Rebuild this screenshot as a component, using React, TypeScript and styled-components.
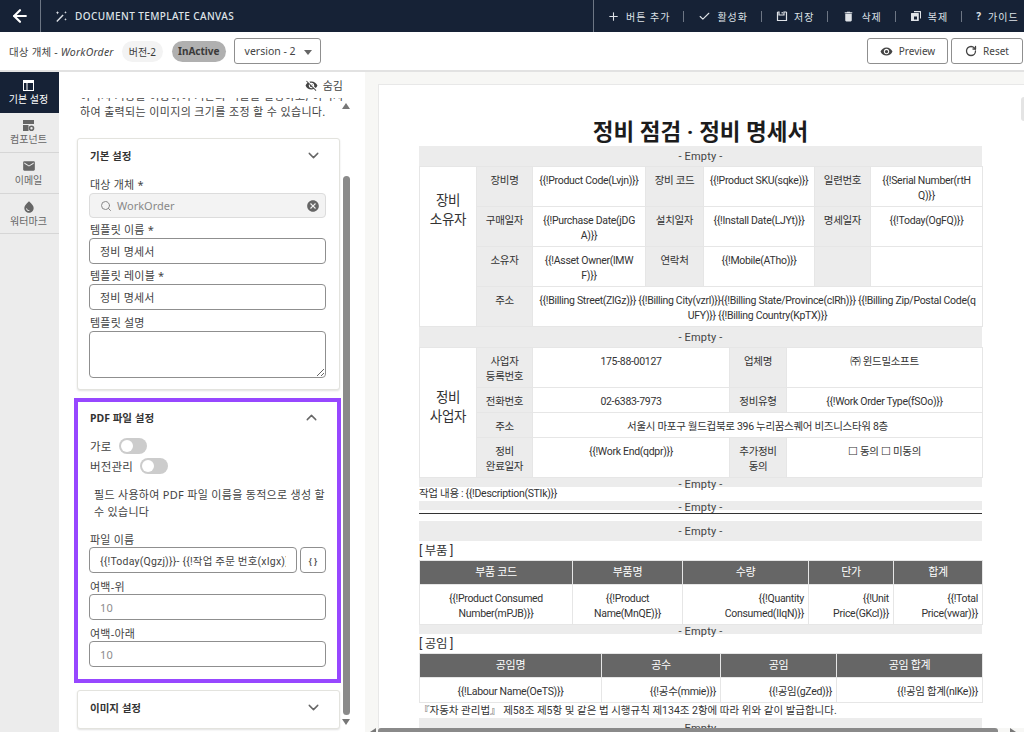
import React from 'react'
import styled, { createGlobalStyle } from 'styled-components'
import { ArrowLeft, Plus, Check, RotateCw, Search, ChevronDown, ChevronUp } from 'lucide-react'
import { MdVisibility, MdVisibilityOff, MdEmail, MdWaterDrop, MdCancel, MdDelete } from 'react-icons/md'

const fontStack = '"Noto Sans", "Noto Sans CJK KR", sans-serif'
const docFont = 'Roboto, "Noto Sans CJK KR", sans-serif'

const GlobalStyle = createGlobalStyle`
    html, body {
        margin: 0;
        padding: 0;
        width: 1024px;
        height: 732px;
        overflow: hidden;
        background: #fff;
        font-family: ${fontStack};
        color: #333;
    }
    * {
        box-sizing: border-box;
    }
`

const Page = styled.div`
    width: 1024px;
    height: 732px;
    display: flex;
    flex-direction: column;
    overflow: hidden;
`

const Header = styled.header`
    height: 32px;
    flex: none;
    display: flex;
    align-items: stretch;
    background: #162236;
    color: #dfe3e8;
`

const BackButton = styled.div`
    width: 41px;
    display: flex;
    align-items: center;
    justify-content: center;
    border-right: 1px solid #6d7684;
    color: #fff;
`

const HeaderTitle = styled.div`
    flex: 1;
    display: flex;
    align-items: center;
    gap: 7px;
    padding-left: 14px;
    font-size: 10px;
    letter-spacing: 0.4px;
    font-weight: 500;
`

const Actions = styled.div`
    display: flex;
    align-items: center;
    border-left: 1px solid #6d7684;
    padding-left: 13px;
    width: 431px;
`

const Action = styled.div`
    display: flex;
    align-items: center;
    gap: 6px;
    font-size: 10px;
    letter-spacing: 1px;
    white-space: nowrap;
    padding-right: 14px;
    margin-right: 14px;
    position: relative;
    &:not(:last-child)::after {
        content: '';
        position: absolute;
        right: 0;
        top: 2px;
        bottom: 2px;
        width: 1px;
        background: #6d7684;
    }
    &:last-child {
        padding-right: 0;
        margin-right: 0;
    }
`

const Toolbar = styled.div`
    height: 40px;
    flex: none;
    display: flex;
    align-items: center;
    padding: 0 1px 0 9px;
    border-bottom: 2px solid #e2e2e2;
    font-size: 10.5px;
    color: #444;
`

const ObjectName = styled.span`
    margin-right: 8px;
    letter-spacing: 0.2px;
    > em {
        font-style: italic;
    }
`

const Chip = styled.span<{ $dark?: boolean }>`
    height: 21px;
    display: inline-flex;
    align-items: center;
    padding: 0 ${p => (p.$dark ? 6 : 7)}px;
    margin-right: ${p => (p.$dark ? 8 : 9)}px;
    border-radius: 11px;
    font-size: 10px;
    font-weight: ${p => (p.$dark ? 700 : 400)};
    background: ${p => (p.$dark ? '#b0b0b0' : '#f3f3f3')};
    color: #3a3a3a;
`

const SelectBox = styled.div`
    width: 87px;
    height: 26px;
    display: flex;
    align-items: center;
    justify-content: space-between;
    padding: 0 8px 0 10px;
    border: 1px solid #8f8f8f;
    border-radius: 3px;
    font-size: 10.5px;
    &::after {
        content: '';
        border-left: 4px solid transparent;
        border-right: 4px solid transparent;
        border-top: 5px solid #666;
        margin-top: 2px;
    }
`

const Spacer = styled.div`
    flex: 1;
`

const ToolButton = styled.div<{ $w: number }>`
    width: ${p => p.$w}px;
    height: 26px;
    margin-left: 3px;
    display: flex;
    align-items: center;
    justify-content: center;
    gap: 6px;
    border: 1px solid #8f8f8f;
    border-radius: 3px;
    font-size: 10px;
    color: #444;
`

const Body = styled.div`
    flex: 1;
    min-height: 0;
    display: flex;
`

const Sidebar = styled.nav`
    width: 59px;
    flex: none;
    background: #ececec;
`

const SideItem = styled.div<{ $active?: boolean }>`
    height: 40.5px;
    display: flex;
    flex-direction: column;
    align-items: center;
    justify-content: center;
    gap: 1px;
    padding-right: 2px;
    font-size: 10px;
    line-height: 12px;
    color: ${p => (p.$active ? '#fff' : '#666')};
    background: ${p => (p.$active ? '#162236' : 'transparent')};
    border-bottom: 1px solid ${p => (p.$active ? '#162236' : '#d6d6d6')};
`

const Panel = styled.section`
    width: 306px;
    flex: none;
    display: flex;
    flex-direction: column;
    background: #fff;
`

const HideRow = styled.div`
    height: 26px;
    flex: none;
    display: flex;
    align-items: center;
    justify-content: flex-end;
    gap: 5px;
    padding-right: 22px;
    font-size: 11px;
    color: #444;
`

const PanelBody = styled.div`
    flex: 1;
    min-height: 0;
    display: flex;
`

const ScrollView = styled.div`
    width: 284px;
    flex: none;
    overflow: hidden;
    padding-left: 15px;
`

const ScrollContent = styled.div`
    margin-top: -10px;
    display: flex;
    flex-direction: column;
`

const HelpText = styled.p`
    margin: 0 0 18px 6px;
    width: 258px;
    font-size: 11px;
    line-height: 16px;
    letter-spacing: 0.35px;
    color: #444;
    white-space: nowrap;
`

const Card = styled.div<{ $highlight?: boolean; $h: number }>`
    height: ${p => p.$h}px;
    width: ${p => (p.$highlight ? 267 : 263)}px;
    margin: ${p => (p.$highlight ? '0' : '0 0 0 3px')};
    padding: ${p => (p.$highlight ? '6px 11px 0 11px' : '7px 11px 0 11px')};
    border: ${p => (p.$highlight ? '4px solid #9747ff' : '1px solid #e3e3de')};
    border-radius: ${p => (p.$highlight ? '0' : '3px')};
    box-shadow: ${p => (p.$highlight ? 'none' : '0 1px 2px rgba(0, 0, 0, 0.12)')};
    background: #fff;
`

const CardGap = styled.div<{ $h: number }>`
    height: ${p => p.$h}px;
    flex: none;
`

const CardHead = styled.div<{ $gap: number }>`
    height: 18px;
    display: flex;
    align-items: center;
    justify-content: space-between;
    padding: 0 6px 0 1px;
    margin-bottom: ${p => p.$gap}px;
    font-size: 10.5px;
    font-weight: 700;
    color: #333;
`

const Label = styled.div<{ $h: number }>`
    height: ${p => p.$h}px;
    line-height: 15px;
    padding-left: 1px;
    font-size: 11px;
    letter-spacing: 0.2px;
    color: #444;
`

const Field = styled.div<{ $gap: number }>`
    margin-bottom: ${p => p.$gap}px;
`

const InputBase = styled.input`
    display: block;
    width: 237px;
    height: 26px;
    margin-top: 1px;
    padding: 0 10px;
    border: 1px solid #8f8f8f;
    border-radius: 4px;
    outline: none;
    background: #fff;
    font-family: ${fontStack};
    font-size: 11px;
    letter-spacing: 0.2px;
    color: #444;
    &::placeholder {
        color: #8c8c8c;
    }
`

const LookupBox = styled.div`
    width: 237px;
    height: 25px;
    margin-top: 1px;
    display: flex;
    align-items: center;
    gap: 5px;
    padding: 0 5px 0 10px;
    border: 1px solid #dcdcdc;
    border-radius: 4px;
    background: #f3f3f3;
    font-size: 11px;
    color: #888;
    > span {
        flex: 1;
    }
`

const DescArea = styled.textarea`
    display: block;
    width: 237px;
    height: 47px;
    margin-top: 1px;
    border: 1px solid #8f8f8f;
    border-radius: 4px;
    outline: none;
    background: #fff;
`

const ToggleRow = styled.div`
    height: 20px;
    display: flex;
    align-items: center;
    gap: 7px;
    padding-left: 1px;
    font-size: 11.5px;
    letter-spacing: 0.2px;
    color: #444;
`

const Toggle = styled.span`
    width: 28px;
    height: 16px;
    border-radius: 8px;
    background: #cccccc;
    padding: 2px;
    display: block;
    &::before {
        content: '';
        display: block;
        width: 12px;
        height: 12px;
        border-radius: 50%;
        background: #fff;
    }
`

const PdfHelp = styled.p`
    margin: 10px 0 12px 5px;
    font-size: 11px;
    line-height: 17px;
    letter-spacing: 0.3px;
    color: #444;
`

const InlineRow = styled.div`
    display: flex;
    gap: 3px;
`

const FileInput = styled(InputBase)`
    width: 208px;
    font-family: ${docFont};
    font-size: 10.5px;
    letter-spacing: 0.2px;
`

const MergeButton = styled.div`
    width: 26px;
    height: 26px;
    margin-top: 1px;
    display: flex;
    align-items: center;
    justify-content: center;
    border: 1px solid #8f8f8f;
    border-radius: 4px;
    font-size: 8px;
    font-weight: 700;
    color: #555;
`

const Track = styled.div`
    width: 8px;
    flex: none;
    margin-left: -1px;
    display: flex;
    flex-direction: column;
    align-items: center;
`

const ArrowUp = styled.div`
    margin-top: 5px;
    border-left: 4px solid transparent;
    border-right: 4px solid transparent;
    border-bottom: 6px solid #777;
`

const ArrowDown = styled.div`
    margin-top: 4px;
    border-left: 4px solid transparent;
    border-right: 4px solid transparent;
    border-top: 6px solid #777;
`

const Thumb = styled.div`
    width: 7px;
    height: 539px;
    margin-top: 67px;
    border-radius: 4px;
    background: #8a8a8a;
`

const Canvas = styled.main`
    flex: 1;
    min-width: 0;
    display: flex;
    flex-direction: column;
    padding: 12px 0 0 13px;
    background: #f7f7f5;
`

const Paper = styled.div`
    flex: 1;
    min-height: 0;
    overflow: hidden;
    position: relative;
    padding: 33px 0 0 40px;
    background: #fff;
    border: 1px solid #e8e8e8;
    border-right: none;
    border-bottom: none;
    &::after {
        content: '';
        position: absolute;
        right: 0;
        top: 12px;
        width: 3px;
        height: 24px;
        border-radius: 3px 0 0 3px;
        background: #e4e4e4;
    }
`

const Doc = styled.div`
    width: 563px;
    font-family: ${docFont};
    font-size: 10.5px;
    line-height: 15px;
    letter-spacing: -0.3px;
    color: #333;
`

const DocTitle = styled.h1`
    margin: 0;
    height: 28px;
    line-height: 28px;
    text-align: center;
    font-size: 22.5px;
    letter-spacing: 0;
    font-weight: 700;
    color: #1c1c1c;
`

const Band = styled.div<{ $h: number }>`
    height: ${p => p.$h}px;
    padding-top: ${p => (p.$h < 12 ? 0 : 1)}px;
    line-height: ${p => (p.$h < 12 ? 13 : p.$h - 1)}px;
    text-align: center;
    background: #ececec;
    color: #444;
    font-size: 11px;
    letter-spacing: 0.2px;
    white-space: nowrap;
`

const Sheet = styled.table`
    width: 563px;
    table-layout: fixed;
    border-collapse: collapse;
`

const Col = styled.col<{ $w: number }>`
    width: ${p => p.$w}px;
`

const Td = styled.td<{ $label?: boolean; $right?: boolean }>`
    padding: 6px ${p => (p.$right ? 4 : 2)}px 3px;
    border: 1px solid #e6e6e6;
    vertical-align: top;
    text-align: ${p => (p.$right ? 'right' : 'center')};
    background: ${p => (p.$label ? '#ececec' : '#fff')};
    overflow-wrap: anywhere;
`

const GroupCell = styled.td<{ $top: number }>`
    padding: ${p => p.$top}px 0 0;
    border: 1px solid #e6e6e6;
    vertical-align: top;
    text-align: center;
    font-size: 13.5px;
    line-height: 19px;
`

const Th = styled.th`
    height: 24px;
    padding: 0;
    border: 1px solid #e6e6e6;
    background: #666;
    color: #fff;
    font-size: 11px;
    font-weight: 400;
`

const TextLine = styled.div<{ $h: number }>`
    height: ${p => p.$h}px;
    line-height: ${p => p.$h}px;
    white-space: nowrap;
`

const Notice = styled(TextLine)`
    letter-spacing: 0;
`

const Rule = styled.div`
    height: 1px;
    margin: 3px 0 7px;
    background: #333;
`

const SectionName = styled.div`
    height: 19px;
    line-height: 19px;
    font-size: 12.5px;
`

const HBar = styled.div`
    height: 4px;
    flex: none;
    margin-left: -8px;
    display: flex;
    align-items: flex-end;
    gap: 2px;
`

const HThumb = styled.div`
    width: 620px;
    height: 4px;
    border-radius: 3px 3px 0 0;
    background: #8a8a8a;
`

const TipLeft = styled.div`
    border-top: 4px solid transparent;
    border-right: 6px solid #777;
`

const TipRight = styled.div`
    margin-left: 10px;
    border-top: 4px solid transparent;
    border-left: 6px solid #777;
`

function FloppyIcon() {
    return (
        <svg width="12" height="12" viewBox="0 0 12 12" fill="none" stroke="currentColor" strokeWidth="1.2">
            <path d="M1.5 2v8.5h9V2" />
            <path d="M1.5 2h1.5v3h5V2h2.5" />
            <path d="M6.2 2v1.6" />
        </svg>
    )
}

function CopyIcon() {
    return (
        <svg width="12" height="12" viewBox="0 0 12 12" fill="currentColor">
            <path d="M4 1h6.5a.5.5 0 0 1 .5.5V8a.5.5 0 0 1-.5.5H10V2.2H4z" />
            <path d="M1.5 3h6.8a.5.5 0 0 1 .5.5v7a.5.5 0 0 1-.5.5H1.5a.5.5 0 0 1-.5-.5v-7a.5.5 0 0 1 .5-.5zM4 6.5v3h3v-3z" fillRule="evenodd" />
        </svg>
    )
}

function WandIcon() {
    return (
        <svg width="13" height="13" viewBox="0 0 13 13" fill="currentColor">
            <path d="M7.6 4.6l1 1L2.3 12l-1-1z" />
            <path d="M2.5 1l.5 1.2 1.2.5-1.2.5-.5 1.2-.5-1.2L.8 2.7 2 2.2z" />
            <path d="M10.5 1l.4 1 1 .4-1 .4-.4 1-.4-1-1-.4 1-.4z" />
            <path d="M10.5 8l.4 1 1 .4-1 .4-.4 1-.4-1-1-.4 1-.4z" />
        </svg>
    )
}

function LayoutIcon() {
    return (
        <svg width="13" height="13" viewBox="0 0 13 13">
            <path d="M1 1h11v11H1zM2 4v7h2.5V4zm3.5 0v7H11V4z" fill="currentColor" fillRule="evenodd" />
        </svg>
    )
}

function ComponentIcon() {
    return (
        <svg width="13" height="13" viewBox="0 0 13 13" fill="currentColor">
            <path d="M1 1h11v4H1z" />
            <path d="M1 6h5.5v6H1z" />
            <path d="M9.5 6.5a2.8 2.8 0 1 1 0 5.6a2.8 2.8 0 0 1 0-5.6zm0 1.6a1.2 1.2 0 1 0 0 2.4a1.2 1.2 0 0 0 0-2.4z" fillRule="evenodd" />
        </svg>
    )
}

function App() {
    return (
        <Page>
            <GlobalStyle />
            <Header>
                <BackButton><ArrowLeft size={20} strokeWidth={2.6} /></BackButton>
                <HeaderTitle><WandIcon />DOCUMENT TEMPLATE CANVAS</HeaderTitle>
                <Actions>
                    <Action><Plus size={13} />버튼 추가</Action>
                    <Action><Check size={13} />활성화</Action>
                    <Action><FloppyIcon />저장</Action>
                    <Action><MdDelete size={13} />삭제</Action>
                    <Action><CopyIcon />복제</Action>
                    <Action><b>?</b>가이드</Action>
                </Actions>
            </Header>
            <Toolbar>
                <ObjectName>대상 개체 - <em>WorkOrder</em></ObjectName>
                <Chip>버전-2</Chip>
                <Chip $dark>InActive</Chip>
                <SelectBox>version - 2</SelectBox>
                <Spacer />
                <ToolButton $w={81}><MdVisibility size={13} />Preview</ToolButton>
                <ToolButton $w={72}><RotateCw size={12} strokeWidth={2.6} />Reset</ToolButton>
            </Toolbar>
            <Body>
                <Sidebar>
                    <SideItem $active><LayoutIcon />기본 설정</SideItem>
                    <SideItem><ComponentIcon />컴포넌트</SideItem>
                    <SideItem><MdEmail size={14} />이메일</SideItem>
                    <SideItem><MdWaterDrop size={14} />워터마크</SideItem>
                </Sidebar>
                <Panel>
                    <HideRow><MdVisibilityOff size={13} />숨김</HideRow>
                    <PanelBody>
                        <ScrollView>
                            <ScrollContent>
                                <HelpText>
                                    이미지 기능을 이용하여 기본의 비율을 설정하고, 이미지 삽입 기능<br />
                                    하여 출력되는 이미지의 크기를 조정 할 수 있습니다.
                                </HelpText>
                                <Card $h={252}>
                                    <CardHead $gap={13}>기본 설정<ChevronDown size={17} color="#666" /></CardHead>
                                    <Field $gap={4}>
                                        <Label $h={15}>대상 개체 *</Label>
                                        <LookupBox><Search size={12} /><span>WorkOrder</span><MdCancel size={14} color="#666" /></LookupBox>
                                    </Field>
                                    <Field $gap={4}>
                                        <Label $h={15}>템플릿 이름 *</Label>
                                        <InputBase defaultValue="정비 명세서" />
                                    </Field>
                                    <Field $gap={5}>
                                        <Label $h={15}>템플릿 레이블 *</Label>
                                        <InputBase defaultValue="정비 명세서" />
                                    </Field>
                                    <Field $gap={4}>
                                        <Label $h={15}>템플릿 설명</Label>
                                        <DescArea />
                                    </Field>
                                </Card>
                                <CardGap $h={8} />
                                <Card $highlight $h={285}>
                                    <CardHead $gap={10}>PDF 파일 설정<ChevronUp size={17} color="#666" /></CardHead>
                                    <ToggleRow>가로<Toggle /></ToggleRow>
                                    <ToggleRow>버전관리<Toggle /></ToggleRow>
                                    <PdfHelp>필드 사용하여 PDF 파일 이름을 동적으로 생성 할 수 있습니다</PdfHelp>
                                    <Field $gap={6}>
                                        <Label $h={14}>파일 이름</Label>
                                        <InlineRow>
                                            <FileInput defaultValue="{{!Today(Qgzj)}}- {{!작업 주문 번호(xIgx)}}" />
                                            <MergeButton>{'{ }'}</MergeButton>
                                        </InlineRow>
                                    </Field>
                                    <Field $gap={6}>
                                        <Label $h={14}>여백-위</Label>
                                        <InputBase placeholder="10" />
                                    </Field>
                                    <Field $gap={6}>
                                        <Label $h={14}>여백-아래</Label>
                                        <InputBase placeholder="10" />
                                    </Field>
                                </Card>
                                <CardGap $h={7} />
                                <Card $h={39}>
                                    <CardHead $gap={0}>이미지 설정<ChevronDown size={17} color="#666" /></CardHead>
                                </Card>
                            </ScrollContent>
                        </ScrollView>
                        <Track>
                            <ArrowUp />
                            <Thumb />
                            <ArrowDown />
                        </Track>
                    </PanelBody>
                </Panel>
                <Canvas>
                    <Paper>
                        <Doc>
                            <DocTitle>정비 점검 · 정비 명세서</DocTitle>
                            <Band $h={20}>- Empty -</Band>
                            <Sheet>
                                <colgroup>
                                    <Col $w={57} /><Col $w={56} /><Col $w={113} /><Col $w={58} /><Col $w={111} /><Col $w={56} /><Col $w={112} />
                                </colgroup>
                                <tbody>
                                    <tr>
                                        <GroupCell rowSpan={4} $top={24}>장비<br />소유자</GroupCell>
                                        <Td $label>장비명</Td>
                                        <Td>{'{{!Product Code(Lvjn)}}'}</Td>
                                        <Td $label>장비 코드</Td>
                                        <Td>{'{{!Product SKU(sqke)}}'}</Td>
                                        <Td $label>일련번호</Td>
                                        <Td>{'{{!Serial Number(rtH'}<br />{'Q)}}'}</Td>
                                    </tr>
                                    <tr>
                                        <Td $label>구매일자</Td>
                                        <Td>{'{{!Purchase Date(jDG'}<br />{'A)}}'}</Td>
                                        <Td $label>설치일자</Td>
                                        <Td>{'{{!Install Date(LJYt)}}'}</Td>
                                        <Td $label>명세일자</Td>
                                        <Td>{'{{!Today(OgFQ)}}'}</Td>
                                    </tr>
                                    <tr>
                                        <Td $label>소유자</Td>
                                        <Td>{'{{!Asset Owner(lMW'}<br />{'F)}}'}</Td>
                                        <Td $label>연락처</Td>
                                        <Td>{'{{!Mobile(ATho)}}'}</Td>
                                        <Td $label />
                                        <Td />
                                    </tr>
                                    <tr>
                                        <Td $label>주소</Td>
                                        <Td colSpan={5}>
                                            {'{{!Billing Street(ZlGz)}} {{!Billing City(vzrl)}}{{!Billing State/Province(clRh)}} {{!Billing Zip/Postal Code(q'}<br />
                                            {'UFY)}} {{!Billing Country(KpTX)}}'}
                                        </Td>
                                    </tr>
                                </tbody>
                            </Sheet>
                            <Band $h={20}>- Empty -</Band>
                            <Sheet>
                                <colgroup>
                                    <Col $w={57} /><Col $w={56} /><Col $w={197} /><Col $w={57} /><Col $w={196} />
                                </colgroup>
                                <tbody>
                                    <tr>
                                        <GroupCell rowSpan={4} $top={40}>정비<br />사업자</GroupCell>
                                        <Td $label>사업자<br />등록번호</Td>
                                        <Td>175-88-00127</Td>
                                        <Td $label>업체명</Td>
                                        <Td>㈜ 윈드밀소프트</Td>
                                    </tr>
                                    <tr>
                                        <Td $label>전화번호</Td>
                                        <Td>02-6383-7973</Td>
                                        <Td $label>정비유형</Td>
                                        <Td>{'{{!Work Order Type(fSOo)}}'}</Td>
                                    </tr>
                                    <tr>
                                        <Td $label>주소</Td>
                                        <Td colSpan={3}>서울시 마포구 월드컵북로 396 누리꿈스퀘어 비즈니스타워 8층</Td>
                                    </tr>
                                    <tr>
                                        <Td $label>정비<br />완료일자</Td>
                                        <Td>{'{{!Work End(qdpr)}}'}</Td>
                                        <Td $label>추가정비<br />동의</Td>
                                        <Td>☐ 동의 ☐ 미동의</Td>
                                    </tr>
                                </tbody>
                            </Sheet>
                            <Band $h={9}>- Empty -</Band>
                            <TextLine $h={14}>작업 내용 : {'{{!Description(STIk)}}'}</TextLine>
                            <Band $h={9}>- Empty -</Band>
                            <Rule />
                            <Band $h={20}>- Empty -</Band>
                            <SectionName>[ 부품 ]</SectionName>
                            <Sheet>
                                <colgroup>
                                    <Col $w={153} /><Col $w={110} /><Col $w={126} /><Col $w={85} /><Col $w={89} />
                                </colgroup>
                                <thead>
                                    <tr><Th>부품 코드</Th><Th>부품명</Th><Th>수량</Th><Th>단가</Th><Th>합계</Th></tr>
                                </thead>
                                <tbody>
                                    <tr>
                                        <Td>{'{{!Product Consumed'}<br />{'Number(mPJB)}}'}</Td>
                                        <Td>{'{{!Product'}<br />{'Name(MnQE)}}'}</Td>
                                        <Td $right>{'{{!Quantity'}<br />{'Consumed(IIqN)}}'}</Td>
                                        <Td $right>{'{{!Unit'}<br />{'Price(GKcl)}}'}</Td>
                                        <Td $right>{'{{!Total'}<br />{'Price(vwar)}}'}</Td>
                                    </tr>
                                </tbody>
                            </Sheet>
                            <Band $h={9}>- Empty -</Band>
                            <SectionName>[ 공임 ]</SectionName>
                            <Sheet>
                                <colgroup>
                                    <Col $w={182} /><Col $w={119} /><Col $w={116} /><Col $w={146} />
                                </colgroup>
                                <thead>
                                    <tr><Th>공임명</Th><Th>공수</Th><Th>공임</Th><Th>공임 합계</Th></tr>
                                </thead>
                                <tbody>
                                    <tr>
                                        <Td>{'{{!Labour Name(OeTS)}}'}</Td>
                                        <Td $right>{'{{!공수(mmie)}}'}</Td>
                                        <Td $right>{'{{!공임(gZed)}}'}</Td>
                                        <Td $right>{'{{!공임 합계(nlKe)}}'}</Td>
                                    </tr>
                                </tbody>
                            </Sheet>
                            <Notice $h={15}>『자동차 관리법』 제58조 제5항 및 같은 법 시행규칙 제134조 2항에 따라 위와 같이 발급합니다.</Notice>
                            <Band $h={20}>- Empty -</Band>
                        </Doc>
                    </Paper>
                    <HBar><TipLeft /><HThumb /><TipRight /></HBar>
                </Canvas>
            </Body>
        </Page>
    )
}

export default App
